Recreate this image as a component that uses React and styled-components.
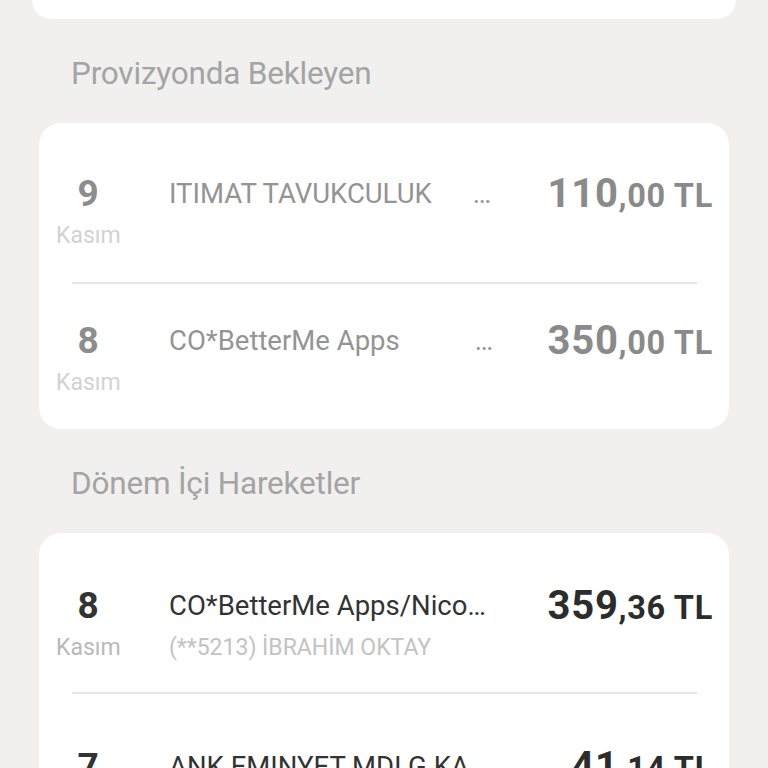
import React from "react";
import styled, { createGlobalStyle } from "styled-components";

const GlobalStyle = createGlobalStyle`
  body {
    margin: 0;
    background: #f1f0ef;
    font-family: Roboto, "Liberation Sans", sans-serif;
  }
`

const Page = styled.div`
  padding: 0 39px;
  height: 768px;
  overflow: hidden;
`

const TopCard = styled.div`
  height: 19px;
  margin: 0 -7px;
  background: #fff;
  border-radius: 0 0 20px 20px;
`

const Heading = styled.h2`
  margin: 0;
  padding: 37px 32px 31px;
  font-size: 31.5px;
  line-height: 36px;
  font-weight: 400;
  color: #a4a4a4;
  letter-spacing: -0.2px;
`

const Card = styled.div`
  background: #fff;
  border-radius: 22px;
  padding: ${p => (p.pending ? "14px" : "0")} 16px 0 17px;
`

// date | merchant | amount, two lines each
const Row = styled.div`
  display: grid;
  grid-template-columns: 64px 326px 1fr;
  grid-template-rows: 45px 39px;
  column-gap: 49px;
  padding: ${p => (p.pending ? "34px 0 27px" : "50px 0 25px")};
`

const Day = styled.div`
  grid-column: 1;
  grid-row: 1;
  text-align: center;
  font-size: 37px;
  line-height: 45px;
  font-weight: 700;
  color: ${p => (p.pending ? "#8d8d8d" : "#333")};
`

const Month = styled.div`
  grid-column: 1;
  grid-row: 2;
  text-align: center;
  font-size: 23px;
  line-height: 39px;
  color: ${p => (p.pending ? "#d2d2d2" : "#b9b9b9")};
`

const Name = styled.div`
  grid-column: 2;
  grid-row: 1;
  font-size: 27.5px;
  line-height: 45px;
  color: ${p => (p.pending ? "#949494" : "#333")};
  white-space: pre;
  overflow: hidden;
  text-overflow: ellipsis;
`

const Sub = styled.div`
  grid-column: 2;
  grid-row: 2;
  font-size: 23px;
  line-height: 39px;
  color: #c3c3c3;
  white-space: nowrap;
  overflow: hidden;
  text-overflow: ellipsis;
`

const Amount = styled.div`
  grid-column: 3;
  grid-row: 1;
  justify-self: end;
  line-height: 45px;
  font-weight: 700;
  white-space: nowrap;
  color: ${p => (p.pending ? "#8a8a8a" : "#2c2c2c")};
  letter-spacing: 0.7px;
`

const Whole = styled.span`
  font-size: 40px;
`

const Fraction = styled.span`
  font-size: 32.5px;
`

const Divider = styled.div`
  height: 2px;
  margin: 0 16px;
  background: #e4e4e4;
`

const pending = [
  { day: "9", name: "ITIMAT TAVUKCULUK                    ", whole: "110", frac: ",00 TL" },
  { day: "8", name: "CO*BetterMe Apps                     ", whole: "350", frac: ",00 TL" },
];

const current = [
  { day: "8", name: "CO*BetterMe Apps/Nicosia CY", sub: "(**5213) İBRAHİM OKTAY", whole: "359", frac: ",36 TL" },
  { day: "7", name: "ANK EMINYET MDLG KANTIN", sub: "(**5213) İBRAHİM OKTAY", whole: "41", frac: ",14 TL" },
];

const Transaction = ({ item, isPending }) => (
  <Row pending={isPending}>
    <Day pending={isPending}>{item.day}</Day>
    <Month pending={isPending}>Kasım</Month>
    <Name pending={isPending}>{item.name}</Name>
    {item.sub && <Sub>{item.sub}</Sub>}
    <Amount pending={isPending}>
      <Whole>{item.whole}</Whole>
      <Fraction>{item.frac}</Fraction>
    </Amount>
  </Row>
);

const App = () => (
  <Page>
    <GlobalStyle />
    <TopCard />
    <Heading>Provizyonda Bekleyen</Heading>
    <Card pending>
      {pending.map((item, i) => (
        <React.Fragment key={i}>
          {i > 0 && <Divider />}
          <Transaction item={item} isPending />
        </React.Fragment>
      ))}
    </Card>
    <Heading>Dönem İçi Hareketler</Heading>
    <Card>
      {current.map((item, i) => (
        <React.Fragment key={i}>
          {i > 0 && <Divider />}
          <Transaction item={item} />
        </React.Fragment>
      ))}
    </Card>
  </Page>
);

export default App;
